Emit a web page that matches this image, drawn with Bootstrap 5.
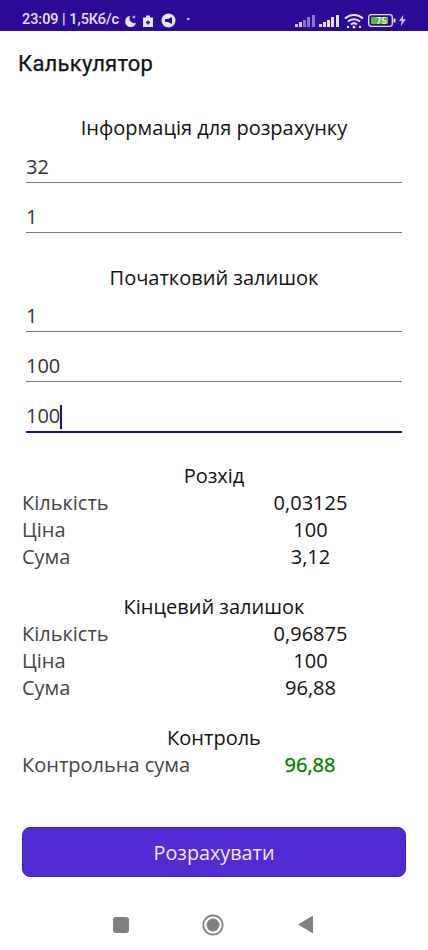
<!DOCTYPE html>
<html lang="uk">
<head>
<meta charset="utf-8">
<title>Калькулятор</title>
<link href="https://cdn.jsdelivr.net/npm/bootstrap@5.3.0/dist/css/bootstrap.min.css" rel="stylesheet">
<style>
html,body{height:950px;overflow:hidden}
body{font-family:"Open Sans",sans-serif;color:#111;background:#fff;display:flex;flex-direction:column}
.stat-bar{height:31px;background:#2a0a96;color:#e9e4f6;font:500 14.4px/1 Roboto,sans-serif;padding:10px 22px 0 22px;flex:none}
.stat-bar svg{display:block;flex:none}
.stat-dot{font-weight:700;margin-left:10px}
.gap6{margin-left:6px}
.gap3{margin-left:3px}
.title-bar{height:65px;padding-left:18px;font:400 22px/1 Roboto,sans-serif;letter-spacing:.25px;-webkit-text-stroke:.25px #111;padding-top:22px;flex:none;color:#111}
.calc-form{padding:0 26px}
.sect-h{font-size:20px;line-height:26px;height:26px;text-align:center;margin:0;font-weight:400}
.sect-a{margin-top:19px}
.sect-b{margin-top:32px}
.gap-first{margin-top:30px}
.gap-next{margin-top:24px}
.fld{border:0;border-bottom:1px solid #777;border-radius:0;padding:0;height:31px;line-height:30px;font-size:20px;color:#333;background:transparent;margin-top:19px}
.fld.first{margin-top:11px}
.fld.sec{margin-top:10px}
.fld.on{border-bottom:2px solid #1f0f8f;height:32px}
.caret-bar{display:inline-block;width:2px;height:24px;background:#1f0f8f;vertical-align:-6px}
.res-box{padding:0 22px}
.res-row{line-height:27px;font-size:20px;height:27px}
.lbl{color:#444}
.val{text-align:center;color:#111;padding-left:1px}
.val.ok{color:#007a00;-webkit-text-stroke:.35px #007a00;padding-left:0}
.calc-btn{margin:0 22px;height:50px;width:384px;background:#512bd4;border:1px solid #3d1fb5;border-radius:8px;color:#f1edfb;font-size:19.8px;line-height:1;padding:1px 0 0}
.nav-strip{height:73px;flex:none;padding:37px 0 0 113px}
.nav-strip svg{display:block}
</style>
</head>
<body>
<div class="stat-bar d-flex align-items-center">
  <span class="text-nowrap">23:09 | 1,5Кб/с</span>
  <svg class="ms-1" width="14" height="14" viewBox="0 0 14 14"><path d="M7 2a5.500 5.500 0 1 0 6 7A5 5 0 0 1 7 2z" fill="#e9e4f6"/><path d="M11 1l.6 1.400L13 3l-1.400.6L11 5l-.6-1.400L9 3l1.400-.6z" fill="#e9e4f6"/></svg>
  <svg class="ms-1" width="14" height="14" viewBox="0 0 14 14"><path d="M5 1.500h4v2h3v9.500H2V3.500h3z" fill="#e9e4f6"/><path d="M7 6.500v4M5 8.500h4" stroke="#2a0a96" stroke-width="1.400"/></svg>
  <svg class="gap6" width="15" height="15" viewBox="0 0 15 15"><circle cx="7.500" cy="7.500" r="7" fill="#e9e4f6"/><path d="M4 6h3l4-2v7L7 9H4z" fill="#2a0a96"/></svg>
  <span class="stat-dot">·</span>
  <span class="ms-auto d-flex align-items-center">
    <svg width="21" height="12" viewBox="0 0 21 12"><g fill="#8a75cc"><rect x="0" y="9" width="3" height="3" fill="#d8d0f0"/><rect x="4" y="7" width="3" height="5" fill="#d8d0f0"/><rect x="8" y="5" width="3" height="7"/><rect x="12" y="2" width="3" height="10"/><rect x="17" y="0" width="3" height="12"/></g></svg>
    <svg class="gap3" width="21" height="12" viewBox="0 0 21 12"><g fill="#e9e4f6"><rect x="0" y="9" width="3" height="3"/><rect x="4" y="7" width="3" height="5"/><rect x="8" y="5" width="3" height="7"/><rect x="12" y="2" width="3" height="10"/><rect x="17" y="0" width="3" height="12"/></g></svg>
    <svg class="ms-1" width="20" height="16" viewBox="0 0 20 16"><g fill="none" stroke="#e9e4f6" stroke-width="2"><path d="M1 5.500a13 13 0 0 1 18 0"/><path d="M4 8.500a9 9 0 0 1 12 0"/><path d="M7 11.500a4.500 4.500 0 0 1 6 0"/></g><circle cx="10" cy="14" r="1.500" fill="#e9e4f6"/><circle cx="4" cy="14" r="1.200" fill="#e9e4f6"/><circle cx="16" cy="14" r="1.200" fill="#e9e4f6"/></svg>
    <svg class="ms-1" width="28" height="13" viewBox="0 0 28 13"><rect x=".7" y=".7" width="23.600" height="11.600" rx="2.500" fill="none" stroke="#e9e4f6" stroke-width="1.300"/><rect x="3" y="3" width="17" height="7" rx="1" fill="#62b52f"/><text x="13.500" y="9.600" text-anchor="middle" font-family="Roboto,sans-serif" font-size="9" font-weight="700" fill="#e9f5dc">75</text><rect x="25.500" y="4.500" width="2" height="4" fill="#e9e4f6"/></svg>
    <svg class="gap3" width="7" height="13" viewBox="0 0 8 13"><path d="M5 0 0 7h3l-1 6 6-8H4.500z" fill="#c9c1e6"/></svg>
  </span>
</div>
<div class="title-bar">Калькулятор</div>
<div class="calc-form">
  <h2 class="sect-h sect-a">Інформація для розрахунку</h2>
  <div class="form-control fld first">32</div>
  <div class="form-control fld">1</div>
  <h2 class="sect-h sect-b">Початковий залишок</h2>
  <div class="form-control fld sec">1</div>
  <div class="form-control fld">100</div>
  <div class="form-control fld on">100<span class="caret-bar"></span></div>
</div>
<div class="res-box">
  <h2 class="sect-h gap-first">Розхід</h2>
  <div class="row g-0 res-row"><div class="col-6 lbl">Кількість</div><div class="col-6 val">0,03125</div></div>
  <div class="row g-0 res-row"><div class="col-6 lbl">Ціна</div><div class="col-6 val">100</div></div>
  <div class="row g-0 res-row"><div class="col-6 lbl">Сума</div><div class="col-6 val">3,12</div></div>
  <h2 class="sect-h gap-next">Кінцевий залишок</h2>
  <div class="row g-0 res-row"><div class="col-6 lbl">Кількість</div><div class="col-6 val">0,96875</div></div>
  <div class="row g-0 res-row"><div class="col-6 lbl">Ціна</div><div class="col-6 val">100</div></div>
  <div class="row g-0 res-row"><div class="col-6 lbl">Сума</div><div class="col-6 val">96,88</div></div>
  <h2 class="sect-h gap-next">Контроль</h2>
  <div class="row g-0 res-row"><div class="col-6 lbl">Контрольна сума</div><div class="col-6 val ok">96,88</div></div>
</div>
<div class="flex-grow-1"></div>
<button type="button" class="btn calc-btn">Розрахувати</button>
<div class="nav-strip">
  <svg width="202" height="22" viewBox="0 0 202 22"><rect x="0" y="3" width="16" height="16" rx="3" fill="#808080"/><circle cx="100" cy="11" r="9.700" fill="none" stroke="#808080" stroke-width="1.800"/><circle cx="100" cy="11" r="6.500" fill="#808080"/><path d="M200 1.500v18l-15-9z" fill="#808080"/></svg>
</div>
</body>
</html>
